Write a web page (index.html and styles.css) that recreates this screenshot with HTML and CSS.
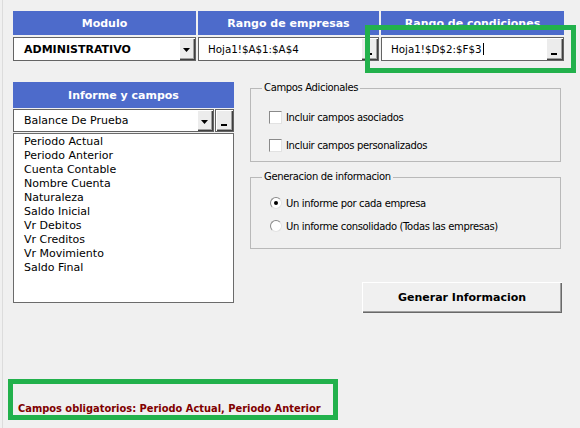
FILE: index.html
```html
<!DOCTYPE html>
<html lang="es">
<head>
<meta charset="utf-8">
<title>Informe</title>
<link rel="stylesheet" href="styles.css">
</head>
<body>
<div class="form">
  <div class="top-row">
    <div class="col">
      <div class="hdr">Modulo</div>
      <div class="field">
        <span class="value bold">ADMINISTRATIVO</span>
        <span class="btn3d drop"><svg width="7" height="4" viewBox="0 0 7 4"><path d="M0 0H7L3.5 4Z" fill="#000"/></svg></span>
      </div>
    </div>
    <div class="col">
      <div class="hdr">Rango de empresas</div>
      <div class="field ref">
        <span class="value">Hoja1!$A$1:$A$4</span>
        <span class="btn3d pick"><span class="bar"></span></span>
      </div>
    </div>
    <div class="col">
      <div class="hdr">Rango de condiciones</div>
      <div class="field ref">
        <span class="value">Hoja1!$D$2:$F$3<span class="caret"></span></span>
        <span class="btn3d pick"><span class="bar"></span></span>
      </div>
    </div>
  </div>

  <div class="mid">
    <div class="left">
      <div class="hdr tall">Informe y campos</div>
      <div class="combo-row">
        <div class="field">
          <span class="value">Balance De Prueba</span>
          <span class="btn3d drop"><svg width="7" height="4" viewBox="0 0 7 4"><path d="M0 0H7L3.5 4Z" fill="#000"/></svg></span>
        </div>
        <span class="btn3d pick solo"><span class="bar"></span></span>
      </div>
      <ul class="list">
        <li>Periodo Actual</li>
        <li>Periodo Anterior</li>
        <li>Cuenta Contable</li>
        <li>Nombre Cuenta</li>
        <li>Naturaleza</li>
        <li>Saldo Inicial</li>
        <li>Vr Debitos</li>
        <li>Vr Creditos</li>
        <li>Vr Movimiento</li>
        <li>Saldo Final</li>
      </ul>
    </div>

    <div class="right">
      <fieldset class="group g1">
        <legend>Campos Adicionales</legend>
        <div class="opts">
          <div class="opt"><span class="check"></span><span>Incluir campos asociados</span></div>
          <div class="opt"><span class="check"></span><span>Incluir campos personalizados</span></div>
        </div>
      </fieldset>
      <fieldset class="group g2">
        <legend>Generacion de informacion</legend>
        <div class="opts">
          <div class="opt"><span class="radio on"></span><span>Un informe por cada empresa</span></div>
          <div class="opt"><span class="radio"></span><span>Un informe consolidado (Todas las empresas)</span></div>
        </div>
      </fieldset>
      <button class="btn-gen" type="button">Generar Informacion</button>
    </div>
  </div>

  <div class="note">Campos obligatorios: Periodo Actual, Periodo Anterior</div>
</div>
<div class="mark mark-top"></div>
<div class="mark mark-bottom"></div>
</body>
</html>
```

FILE: styles.css
```css
* { box-sizing: border-box; }
html, body { margin: 0; padding: 0; }
body {
  width: 580px;
  height: 428px;
  overflow: hidden;
  background: #f0f0f0;
  font-family: "DejaVu Sans", Verdana, sans-serif;
  color: #000;
  position: relative;
}
.form {
  height: 428px;
  margin-left: 2px;
  border-left: 1px solid #dcdcdc;
  padding: 11px 0 0 10px;
  display: flex;
  flex-direction: column;
}
.top-row {
  display: grid;
  grid-template-columns: 183px 181px 183px;
  column-gap: 2px;
}
.col {
  display: flex;
  flex-direction: column;
  gap: 2px;
}
.hdr {
  background: #4d6bcb;
  color: #fff;
  font-weight: bold;
  font-size: 11px;
  height: 24px;
  display: flex;
  align-items: center;
  justify-content: center;
  white-space: nowrap;
  overflow: hidden;
}
.field {
  height: 24px;
  background: #fff;
  border: 1px solid #646464;
  display: flex;
  align-items: stretch;
}
.value {
  flex: 1;
  display: flex;
  align-items: center;
  padding-left: 10px;
  font-size: 11px;
  white-space: nowrap;
  overflow: hidden;
}
.value.bold { font-weight: bold; }
.ref .value { font-size: 10.3px; padding-left: 9px; }
.caret {
  width: 1px;
  height: 12px;
  background: #000;
  margin-left: 1px;
}
.btn3d {
  width: 16px;
  background: #ececec;
  box-shadow: inset 1px 1px #fff, inset -1px -1px #404040, inset -2px -2px #a0a0a0;
  display: flex;
  align-items: center;
  justify-content: center;
  flex-shrink: 0;
}
.drop svg { display: block; margin-top: 2px; margin-right: 1px; }
.pick { width: 17px; align-items: flex-end; }
.pick .bar {
  width: 6px;
  height: 2px;
  background: #000;
  margin-bottom: 5px;
  margin-right: 1px;
}
.pick.solo { width: 19px; border: 1px solid #646464; }

.mid {
  display: grid;
  grid-template-columns: 221px 312px;
  column-gap: 16px;
  margin-top: 21px;
  align-items: start;
}
.left { display: flex; flex-direction: column; }
.hdr.tall { height: 26px; margin-bottom: 1px; }
.combo-row {
  display: grid;
  grid-template-columns: 201px 19px;
  column-gap: 1px;
  height: 23px;
  margin-bottom: 1px;
}
.combo-row .field { height: 23px; }
.list {
  list-style: none;
  margin: 0;
  padding: 1px 0 0 10px;
  height: 170px;
  background: #fff;
  border: 1px solid #6b6b6b;
  font-size: 11px;
  line-height: 14px;
}

.right { display: flex; flex-direction: column; }
.group {
  margin: 0;
  padding: 0;
  border: 1px solid #b9b9b9;
  width: 311px;
  min-width: 0;
  font-size: 10px;
  letter-spacing: -0.35px;
}
.group legend {
  margin-left: 11px;
  padding: 0 2px;
  line-height: 12px;
}
.g1 { height: 80px; }
.g2 { height: 78px; margin-top: 9px; }
.opts { display: flex; flex-direction: column; }
.g1 .opts { padding: 16px 0 0 18px; gap: 14px; }
.g2 .opts { padding: 13px 0 0 19px; gap: 9px; }
.opt {
  display: flex;
  align-items: center;
  gap: 4px;
  height: 14px;
  white-space: nowrap;
}
.check {
  width: 13px;
  height: 13px;
  background: #fff;
  border: 1px solid;
  border-color: #8a8a8a #e2e2e2 #e2e2e2 #8a8a8a;
}
.radio {
  width: 12px;
  height: 12px;
  border-radius: 50%;
  background: #fff;
  border: 1px solid;
  border-color: #8a8a8a #e2e2e2 #e2e2e2 #8a8a8a;
  display: flex;
  align-items: center;
  justify-content: center;
}
.radio.on::after {
  content: "";
  width: 4px;
  height: 4px;
  border-radius: 50%;
  background: #000;
}
.btn-gen {
  align-self: flex-end;
  margin-top: 33px;
  width: 200px;
  height: 31px;
  padding: 0;
  background: #f0f0f0;
  border: 0;
  box-shadow: inset 1px 1px #fff, inset -1px -1px #696969, inset -2px -2px #a0a0a0;
  font: bold 11px "DejaVu Sans", Verdana, sans-serif;
  color: #000;
}

.note {
  margin-top: auto;
  margin-bottom: 13px;
  padding-left: 5px;
  font-size: 9.9px;
  font-weight: bold;
  line-height: 12px;
  color: #800000;
  white-space: nowrap;
}

.mark {
  position: absolute;
  border: 5px solid #22b14c;
  pointer-events: none;
}
.mark-top { left: 365px; top: 25px; width: 211px; height: 48px; }
.mark-bottom { left: 8px; top: 379px; width: 330px; height: 41px; }
```
